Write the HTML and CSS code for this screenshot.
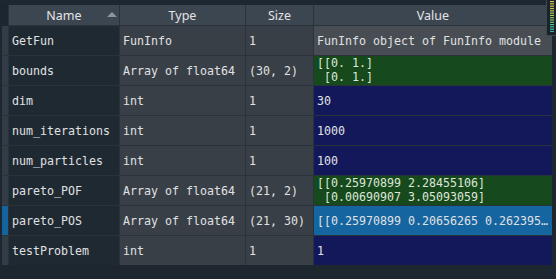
FILE: index.html
```html
<!DOCTYPE html>
<html lang="en">
<head>
    <meta charset="UTF-8">
    <title>Variable explorer</title>
    <link rel="stylesheet" href="styles.css">
</head>
<body>
    <div class="explorer">
        <div class="grid">
            <div class="corner"></div>
            <div class="th th-name">Name <span class="sort"></span></div>
            <div class="th">Type</div>
            <div class="th">Size</div>
            <div class="th">Value</div>

            <div class="rh"></div>
            <div class="cell name">GetFun</div>
            <div class="cell type">FunInfo</div>
            <div class="cell type">1</div>
            <div class="cell val obj">FunInfo object of FunInfo module</div>

            <div class="rh"></div>
            <div class="cell name">bounds</div>
            <div class="cell type">Array of float64</div>
            <div class="cell type">(30, 2)</div>
            <div class="cell val arr multi">[[0. 1.]
 [0. 1.]</div>

            <div class="rh"></div>
            <div class="cell name">dim</div>
            <div class="cell type">int</div>
            <div class="cell type">1</div>
            <div class="cell val num">30</div>

            <div class="rh"></div>
            <div class="cell name">num_iterations</div>
            <div class="cell type">int</div>
            <div class="cell type">1</div>
            <div class="cell val num">1000</div>

            <div class="rh"></div>
            <div class="cell name">num_particles</div>
            <div class="cell type">int</div>
            <div class="cell type">1</div>
            <div class="cell val num">100</div>

            <div class="rh"></div>
            <div class="cell name">pareto_POF</div>
            <div class="cell type">Array of float64</div>
            <div class="cell type">(21, 2)</div>
            <div class="cell val arr multi">[[0.25970899 2.28455106]
 [0.00690907 3.05093059]</div>

            <div class="rh selected"></div>
            <div class="cell name">pareto_POS</div>
            <div class="cell type">Array of float64</div>
            <div class="cell type">(21, 30)</div>
            <div class="cell val selected"><span class="clip">[[0.25970899 0.20656265 0.262395…</span></div>

            <div class="rh"></div>
            <div class="cell name">testProblem</div>
            <div class="cell type">int</div>
            <div class="cell type">1</div>
            <div class="cell val num">1</div>
        </div>

        <div class="minimap">
            <svg width="5" height="32" viewBox="0 0 5 32">
                <rect x="0" y="1" width="4" height="1.2" fill="#d8c24c"/>
                <rect x="0" y="3.3" width="4" height="1.2" fill="#d6c44c"/>
                <rect x="0" y="5.6" width="4" height="1.2" fill="#d2c64e"/>
                <rect x="0" y="7.9" width="4" height="1.2" fill="#cbc850"/>
                <rect x="0" y="10.2" width="4" height="1.2" fill="#c2ca52"/>
                <rect x="0" y="12.5" width="4" height="1.2" fill="#b6cb56"/>
                <rect x="0" y="14.8" width="4" height="1.2" fill="#a6cb5c"/>
                <rect x="0" y="17.1" width="4" height="1.2" fill="#94ca66"/>
                <rect x="0" y="19.4" width="4" height="1.2" fill="#80c872"/>
                <rect x="0" y="21.7" width="4" height="1.2" fill="#6cc680"/>
                <rect x="0" y="24" width="4" height="1.2" fill="#5ac48e"/>
                <rect x="0" y="26.3" width="4" height="1.2" fill="#4cc29c"/>
                <rect x="0" y="28.6" width="4" height="1.2" fill="#42c0aa"/>
                <rect x="0" y="30.9" width="4" height="1" fill="#3cbeb4"/>
            </svg>
        </div>
    </div>
</body>
</html>
```

FILE: styles.css
```css
body {
    margin: 0;
    background-color: #1e2730;
    font-family: 'DejaVu Sans Mono', monospace;
    color: #e0e1e3;
}
.explorer {
    position: relative;
    width: 556px;
    height: 279px;
    overflow: hidden;
    background-color: #1e2730;
}
.grid {
    display: grid;
    grid-template-columns: 6px 110px 125px 67px 238px;
    grid-template-rows: 20px repeat(8, 29px);
    gap: 1px;
    padding: 5px 0 0 2px;
    width: max-content;
    background-color: #2a323a;
    background-clip: content-box;
}
.corner {
    background-color: #1c2630;
    margin: -1px 0 -1px -2px;
}
.th {
    background-color: #3c4651;
    font-family: 'Noto Sans', sans-serif;
    font-size: 12.5px;
    color: #e3e4e6;
    display: flex;
    align-items: center;
    justify-content: center;
    position: relative;
}
.sort {
    position: absolute;
    right: 2px;
    top: 7px;
    width: 0;
    height: 0;
    border-left: 5px solid transparent;
    border-right: 5px solid transparent;
    border-bottom: 5px solid #8c949c;
}
.rh {
    background-color: #313c46;
}
.rh.selected {
    background-color: #1464a0;
}
.cell {
    font-size: 11.63px;
    display: flex;
    align-items: center;
    padding-left: 3px;
    white-space: pre;
    overflow: hidden;
}
.name {
    background-color: #1f2932;
}
.type {
    background-color: #393f46;
}
.val {
    padding-left: 3px;
}
.obj {
    background-color: #474d53;
}
.arr {
    background-color: #164a1d;
    color: #dfe6d8;
}
.num {
    background-color: #12185a;
}
.selected.val {
    background-color: #1565a1;
}
.multi {
    align-items: flex-start;
    line-height: 13.5px;
    padding-top: 1px;
}
.clip {
    overflow: hidden;
}
.minimap {
    position: absolute;
    top: 0;
    right: 0;
    width: 10px;
    height: 36px;
    background-color: #1a222a;
    border-left: 1px solid #3e4853;
    border-bottom: 1px solid #3e4853;
    padding: 0 0 0 3px;
    box-sizing: border-box;
}
.minimap svg {
    display: block;
}
```
